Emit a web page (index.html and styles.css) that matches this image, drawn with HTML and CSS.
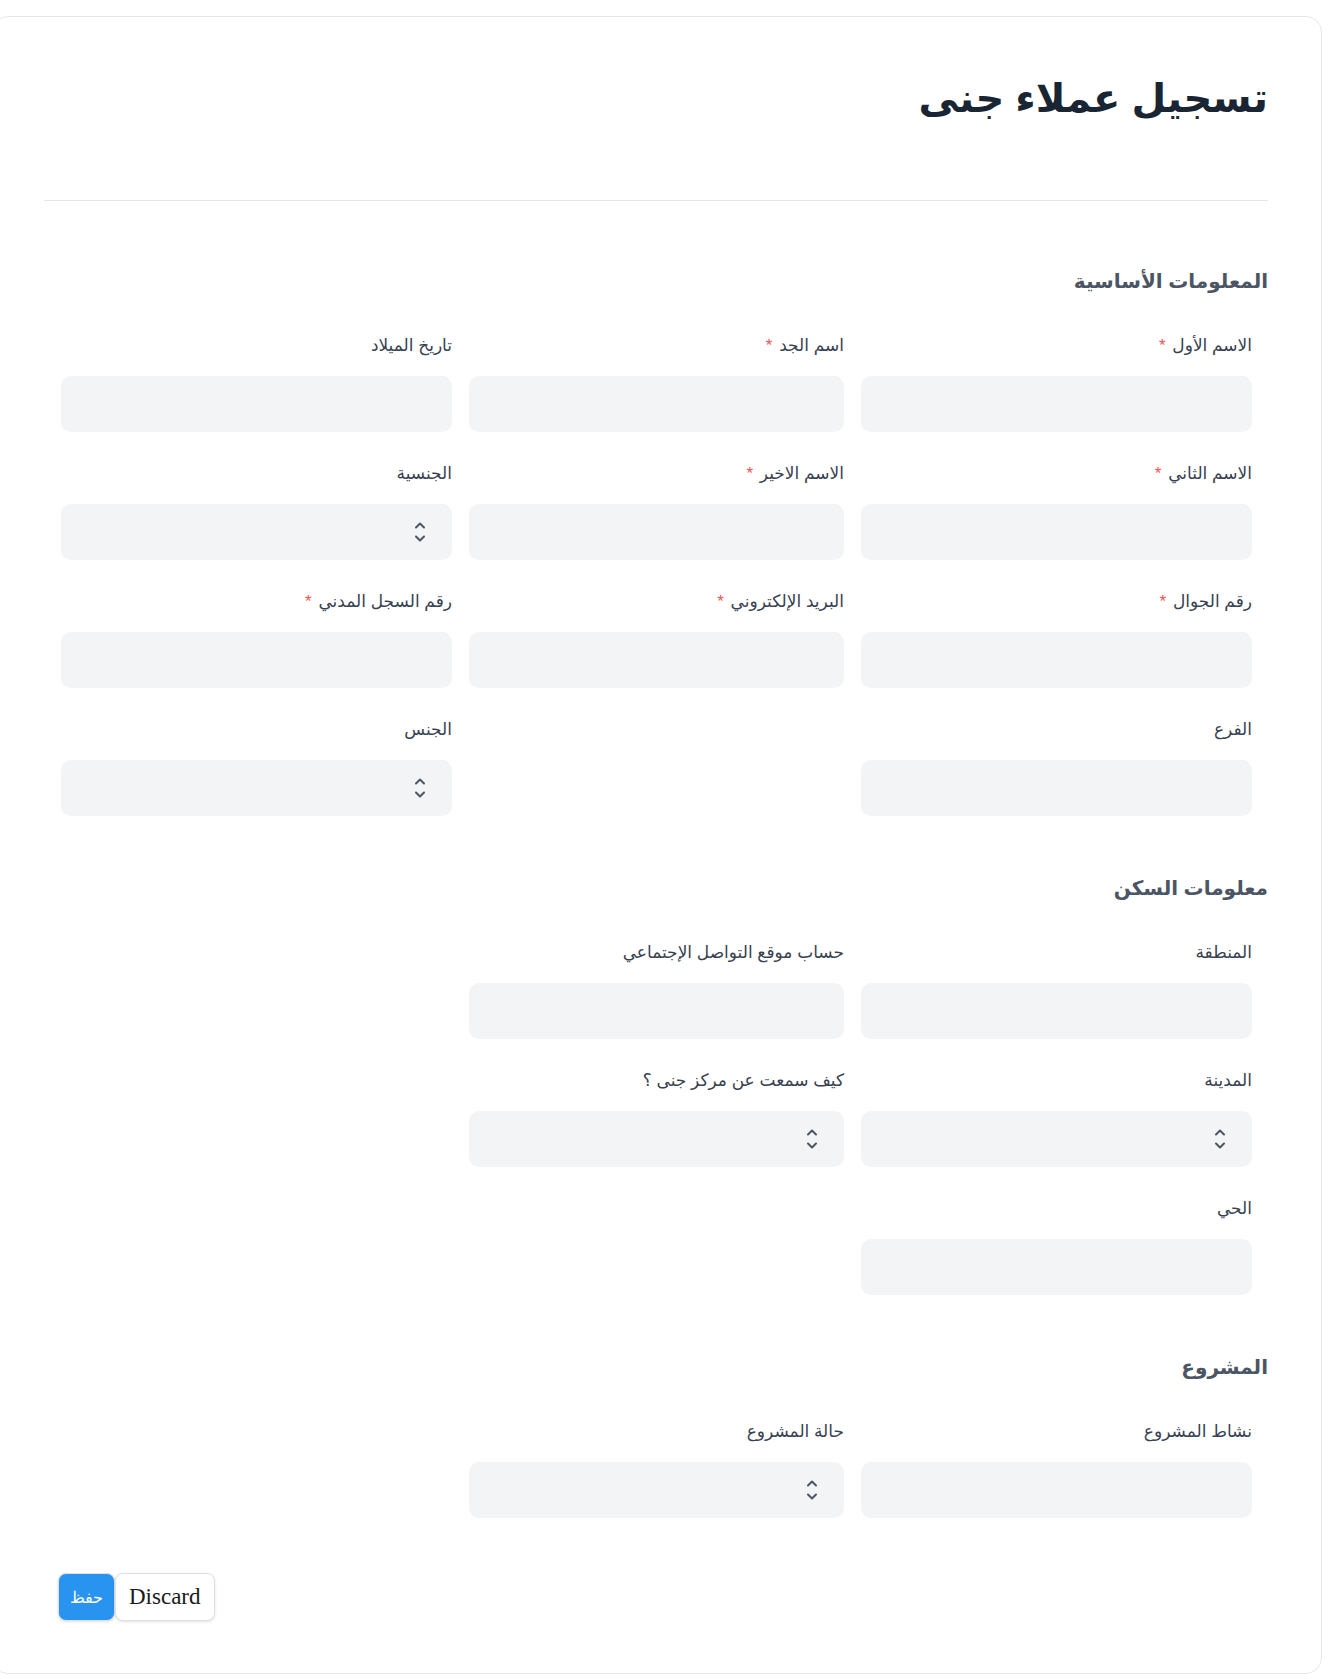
FILE: index.html
```html
<!DOCTYPE html>
<html lang="ar">
<head>
    <meta charset="UTF-8">
    <meta name="viewport" content="width=device-width, initial-scale=1.0">
    <title>تسجيل عملاء جنى</title>
    <link rel="stylesheet" href="styles.css">
</head>
<body>
    <div class="card" dir="rtl">
        <h1 class="title">تسجيل عملاء جنى</h1>
        <hr class="divider">

        <section class="section">
            <h2 class="section-title">المعلومات الأساسية</h2>
            <div class="fields">
                <div class="field">
                    <label>الاسم الأول <span class="req">*</span></label>
                    <input class="input" type="text">
                </div>
                <div class="field">
                    <label>اسم الجد <span class="req">*</span></label>
                    <input class="input" type="text">
                </div>
                <div class="field">
                    <label>تاريخ الميلاد</label>
                    <input class="input" type="text">
                </div>

                <div class="field">
                    <label>الاسم الثاني <span class="req">*</span></label>
                    <input class="input" type="text">
                </div>
                <div class="field">
                    <label>الاسم الاخير <span class="req">*</span></label>
                    <input class="input" type="text">
                </div>
                <div class="field">
                    <label>الجنسية</label>
                    <div class="select-wrap">
                        <select class="input select"></select>
                        <svg class="chevron" width="10" height="20" viewBox="0 0 10 20"><path d="M1 5.5L5 1.5L9 5.5M1 14.5L5 18.5L9 14.5"/></svg>
                    </div>
                </div>

                <div class="field">
                    <label>رقم الجوال <span class="req">*</span></label>
                    <input class="input" type="text">
                </div>
                <div class="field">
                    <label>البريد الإلكتروني <span class="req">*</span></label>
                    <input class="input" type="text">
                </div>
                <div class="field">
                    <label>رقم السجل المدني <span class="req">*</span></label>
                    <input class="input" type="text">
                </div>

                <div class="field">
                    <label>الفرع</label>
                    <input class="input" type="text">
                </div>
                <div class="field col-3">
                    <label>الجنس</label>
                    <div class="select-wrap">
                        <select class="input select"></select>
                        <svg class="chevron" width="10" height="20" viewBox="0 0 10 20"><path d="M1 5.5L5 1.5L9 5.5M1 14.5L5 18.5L9 14.5"/></svg>
                    </div>
                </div>
            </div>
        </section>

        <section class="section">
            <h2 class="section-title">معلومات السكن</h2>
            <div class="fields">
                <div class="field">
                    <label>المنطقة</label>
                    <input class="input" type="text">
                </div>
                <div class="field">
                    <label>حساب موقع التواصل الإجتماعي</label>
                    <input class="input" type="text">
                </div>
                <div class="field"></div>

                <div class="field">
                    <label>المدينة</label>
                    <div class="select-wrap">
                        <select class="input select"></select>
                        <svg class="chevron" width="10" height="20" viewBox="0 0 10 20"><path d="M1 5.5L5 1.5L9 5.5M1 14.5L5 18.5L9 14.5"/></svg>
                    </div>
                </div>
                <div class="field">
                    <label>كيف سمعت عن مركز جنى ؟</label>
                    <div class="select-wrap">
                        <select class="input select"></select>
                        <svg class="chevron" width="10" height="20" viewBox="0 0 10 20"><path d="M1 5.5L5 1.5L9 5.5M1 14.5L5 18.5L9 14.5"/></svg>
                    </div>
                </div>
                <div class="field"></div>

                <div class="field">
                    <label>الحي</label>
                    <input class="input" type="text">
                </div>
            </div>
        </section>

        <section class="section">
            <h2 class="section-title">المشروع</h2>
            <div class="fields">
                <div class="field">
                    <label>نشاط المشروع</label>
                    <input class="input" type="text">
                </div>
                <div class="field">
                    <label>حالة المشروع</label>
                    <div class="select-wrap">
                        <select class="input select"></select>
                        <svg class="chevron" width="10" height="20" viewBox="0 0 10 20"><path d="M1 5.5L5 1.5L9 5.5M1 14.5L5 18.5L9 14.5"/></svg>
                    </div>
                </div>
            </div>
        </section>

        <div class="actions">
            <button class="btn btn-primary" type="button">حفظ</button>
            <button class="btn btn-secondary" type="button">Discard</button>
        </div>
    </div>
</body>
</html>
```

FILE: styles.css
```css
* {
    margin: 0;
    padding: 0;
    box-sizing: border-box;
}

body {
    background: #fff;
    padding-top: 16px;
    font-family: 'Liberation Sans', 'DejaVu Sans', sans-serif;
}

.card {
    margin-left: -8px;
    margin-right: 12px;
    border: 1px solid #e5e7eb;
    border-radius: 16px;
    padding: 45px 53px 52px 51px;
    background: #fff;
}

.title {
    font-size: 40px;
    line-height: 72px;
    font-weight: 700;
    color: #1a2533;
}

.divider {
    border: none;
    border-top: 1px solid #e5e7eb;
    margin-top: 66px;
}

.section {
    margin-top: 54px;
}

.section:first-of-type {
    margin-top: 62px;
}

.section-title {
    font-size: 20px;
    line-height: 36px;
    font-weight: 700;
    color: #4b5563;
    margin-bottom: 35px;
}

.fields {
    display: grid;
    grid-template-columns: 391fr 375fr 391fr;
    column-gap: 17px;
    row-gap: 30px;
    padding: 0 16px 0 17px;
}

.field {
    display: flex;
    flex-direction: column;
}

.field.col-3 {
    grid-column: 3;
}

.field label {
    font-size: 17px;
    line-height: 24px;
    color: #374151;
    margin-bottom: 18px;
}

.req {
    color: #f05252;
    margin-right: 2px;
}

.input {
    width: 100%;
    height: 56px;
    border: none;
    border-radius: 10px;
    background: #f3f4f6;
    outline: none;
}

.select-wrap {
    position: relative;
}

.select {
    appearance: none;
    -webkit-appearance: none;
    display: block;
}

.chevron {
    position: absolute;
    right: 27px;
    top: 18px;
    fill: none;
    stroke: #4b5563;
    stroke-width: 2;
    stroke-linecap: round;
    stroke-linejoin: round;
}

.actions {
    display: flex;
    direction: ltr;
    margin-top: 55px;
    padding-left: 14px;
}

.btn {
    height: 48px;
    padding: 0 11px;
    border-radius: 8px;
    border: 1px solid #e0e0e0;
    box-shadow: 0 1px 3px rgba(0,0,0,0.12);
    cursor: pointer;
}

.btn-primary {
    background: #2993f0;
    color: white;
    font-size: 16px;
    font-family: 'Liberation Serif', 'DejaVu Serif', serif;
}

.btn-secondary {
    background: #fff;
    color: #1a1a1a;
    font-size: 23px;
    font-family: 'Liberation Serif', serif;
    padding: 0 13px;
}
```
